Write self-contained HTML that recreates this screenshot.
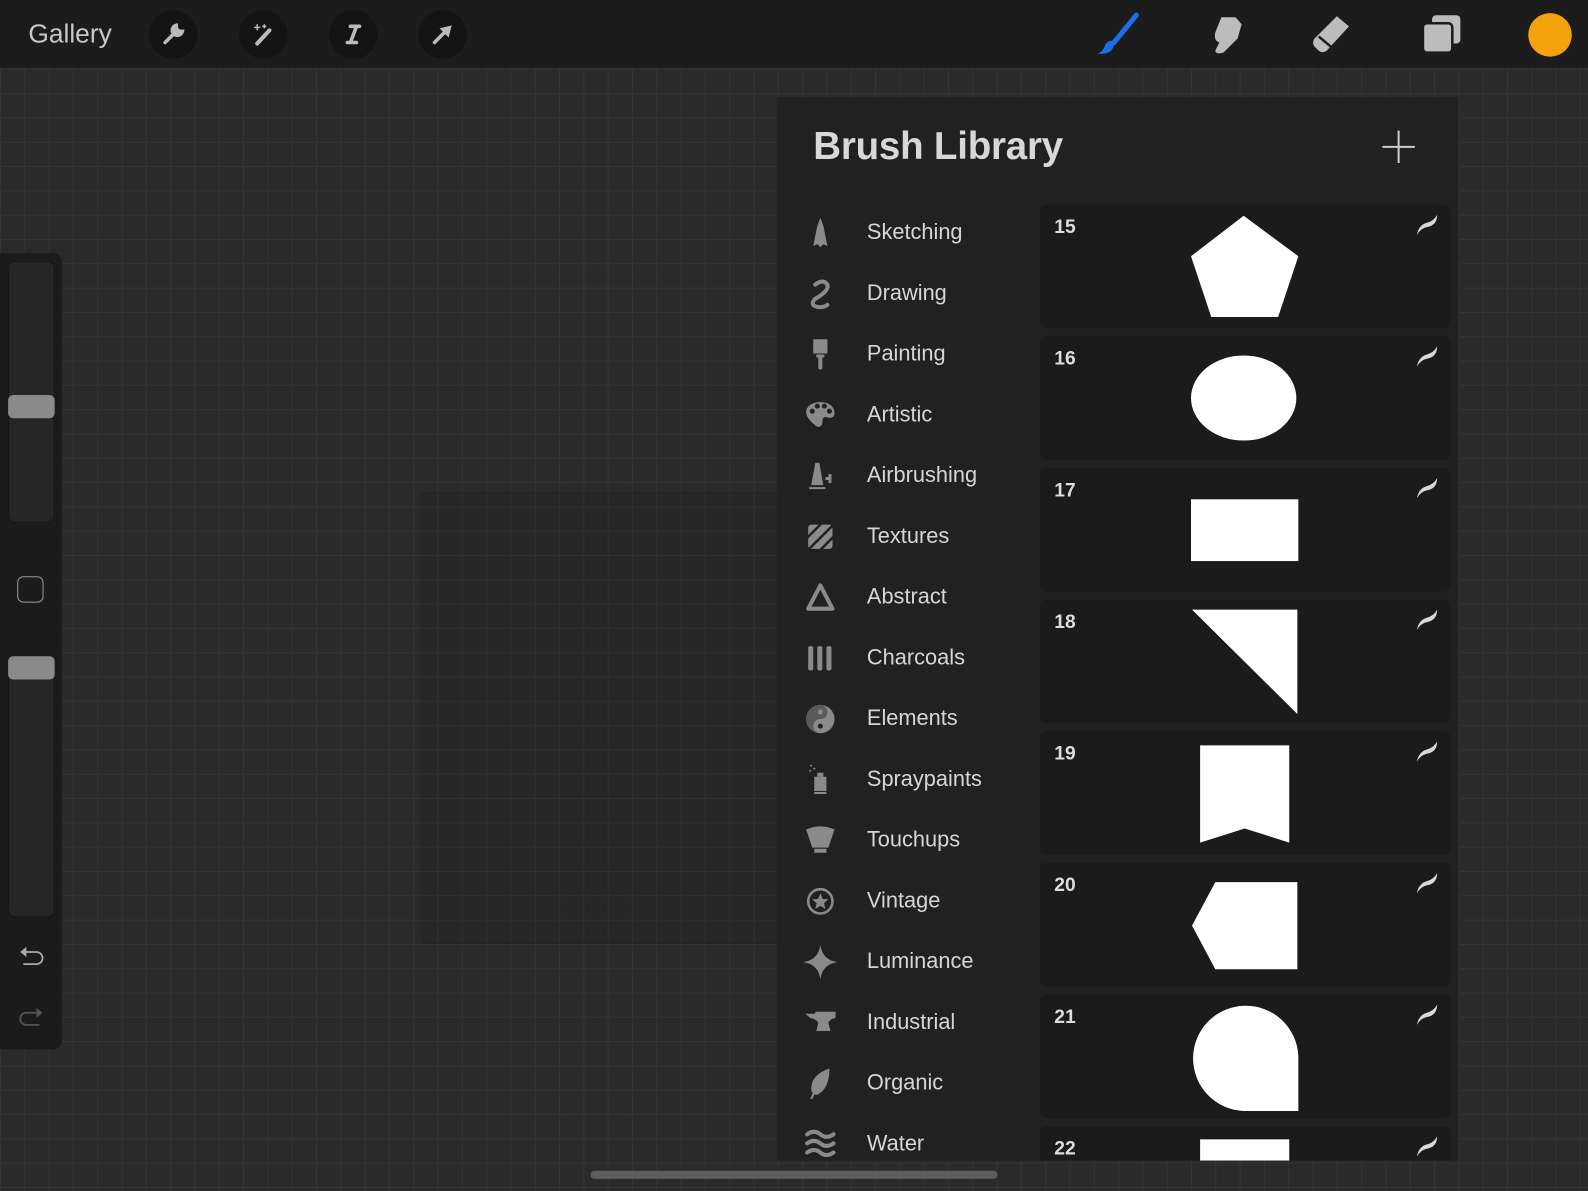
<!DOCTYPE html>
<html><head><meta charset="utf-8"><style>
html,body{margin:0;padding:0;width:1588px;height:1191px;overflow:hidden;background:#2a2a2a}
#w{position:absolute;left:0;top:0;width:1568px;height:1176px;transform:scale(1.01276);transform-origin:0 0;font-family:"Liberation Sans",sans-serif;
background-color:#2a2a2a;background-image:linear-gradient(#343434 1px,transparent 1px),linear-gradient(90deg,#343434 1px,transparent 1px);background-size:24px 24px;background-position:0 -4px}
.top{position:absolute;left:0;top:0;width:1568px;height:67px;background:#1c1c1c}
.gal{position:absolute;left:28px;top:18px;font-size:26px;color:#c8c8c8}
.tc{position:absolute;top:10px;width:48px;height:48px;border-radius:50%;background:#141414}
.tc svg{position:absolute;left:12px;top:12px}
.side{position:absolute;left:0;top:250px;width:61px;height:786px;background:#1b1b1b;border-radius:0 8px 8px 0}
.sl{position:absolute;left:8px;width:46px;background:#262626;border-radius:7px;border:1px solid #151515;box-sizing:border-box}
.th{position:absolute;left:8px;width:46px;height:23px;background:#8a8a8a;border-radius:5px}
.panel{position:absolute;left:767px;top:96px;width:673px;height:1050px;background:#212121;overflow:hidden}
.title{position:absolute;left:36px;top:28px;font-size:38px;font-weight:bold;color:#d8d8d8;letter-spacing:-0.2px}
.row{position:absolute;left:0;height:40px;width:250px}
.row svg{position:absolute;left:26px;top:4px}
.row span{position:absolute;left:89px;top:8px;font-size:21.5px;color:#d6d6d6}
.card{position:absolute;left:260px;width:405px;height:122px;background:#1b1b1b;border-radius:6px;overflow:hidden}
.card b{position:absolute;left:14px;top:12px;font-size:19px;color:#ddd}
.card .sw{position:absolute;left:370px;top:8px}
.card .sh{position:absolute;left:0;top:0}
</style></head><body><div id="w">
<div class="top">
<div class="gal">Gallery</div>
<div class="tc" style="left:147px"><svg width="24" height="24" viewBox="0 0 24 24"><path d="M4 20 L13 11 M15 3 a5 5 0 1 0 6 6 l-3 0 -3 -3 z" stroke="#bbb" stroke-width="3.5" fill="#bbb" stroke-linecap="round"/></svg></div>
<div class="tc" style="left:236px"><svg width="24" height="24" viewBox="0 0 24 24"><path d="M6 21 L18 8" stroke="#bbb" stroke-width="4" stroke-linecap="round"/><path d="M6 2v6M3 5h6M13 2v4M11 4h4" stroke="#bbb" stroke-width="1.5"/></svg></div>
<div class="tc" style="left:325px"><svg width="24" height="24" viewBox="0 0 24 24"><path d="M9 4h9M6 20h9M15 4 L9 20" stroke="#bbb" stroke-width="3.5" stroke-linecap="round"/></svg></div>
<div class="tc" style="left:413px"><svg width="24" height="24" viewBox="0 0 24 24"><path d="M4 20 L16 8" stroke="#bbb" stroke-width="3.5" stroke-linecap="round"/><path d="M21 3 L9 6 L18 15 Z" fill="#bbb"/></svg></div>
<svg style="position:absolute;left:1080px;top:12px" width="48" height="44" viewBox="0 0 48 44"><path d="M42 3 L20 30" stroke="#1a6fe8" stroke-width="5" stroke-linecap="round"/><path d="M19 28 q-6 0 -8 5 q-2 6 -7 8 q10 1 14 -4 q3 -4 1 -9z" fill="#1a6fe8"/></svg>
<svg style="position:absolute;left:1188px;top:12px" width="44" height="44" viewBox="0 0 44 44"><path d="M18 5 h14 l6 7 -4 14 -8 8 -6 6 q-8 2 -8 -2 l4 -8 q-6 -2 -4 -10 z" fill="#bcbcbc"/></svg>
<svg style="position:absolute;left:1294px;top:12px" width="44" height="44" viewBox="0 0 44 44"><path d="M26 4 l12 10 -22 24 q-4 3 -8 0 l-4 -4 q-3 -4 0 -8z" fill="#bcbcbc"/><path d="M8 24 l12 10" stroke="#1c1c1c" stroke-width="2.5"/></svg>
<svg style="position:absolute;left:1401px;top:12px" width="44" height="44" viewBox="0 0 44 44"><rect x="13" y="3" width="28" height="28" rx="4" fill="#bcbcbc"/><rect x="4" y="11" width="29" height="29" rx="4" fill="#bcbcbc" stroke="#1c1c1c" stroke-width="2.5"/></svg>
<div style="position:absolute;left:1509px;top:13px;width:43px;height:43px;border-radius:50%;background:#f5a30d"></div>
</div>
<div style="position:absolute;left:416px;top:486px;width:349px;height:444px;border:1px solid #242424;background:rgba(30,30,30,0.15)"></div>
<div class="side">
<div class="sl" style="top:8px;height:258px"></div><div class="th" style="top:140px"></div>
<div style="position:absolute;left:17px;top:319px;width:26px;height:26px;border:1.5px solid #999;border-radius:6px;box-sizing:border-box"></div>
<div class="sl" style="top:398px;height:258px"></div><div class="th" style="top:398px"></div>
<svg style="position:absolute;left:17px;top:683px" width="28" height="24" viewBox="0 0 28 24"><path d="M3 7 L9 2 V12Z" fill="#aaa"/><path d="M8 7 H19 a6 6 0 0 1 0 12 H6" stroke="#aaa" stroke-width="1.7" fill="none"/></svg>
<svg style="position:absolute;left:17px;top:743px" width="28" height="24" viewBox="0 0 28 24"><path d="M25 7 L19 2 V12Z" fill="#555"/><path d="M20 7 H9 a6 6 0 0 0 0 12 H22" stroke="#555" stroke-width="1.7" fill="none"/></svg>
</div>
<div class="panel">
<div class="title">Brush Library</div>
<svg style="position:absolute;left:597px;top:32px" width="34" height="34"><path d="M17 1V33M1 17H33" stroke="#ccc" stroke-width="2"/></svg>
<div class="row" style="top:113px"><svg width="34" height="34" viewBox="0 0 34 34" fill="#8a8a8a"><path d="M17 2 L20 10 L24 30 L20 28 L17 31 L14 28 L10 30 L14 10Z"/></svg><span>Sketching</span></div>
<div class="row" style="top:173px"><svg width="34" height="34" viewBox="0 0 34 34"><path d="M12 8 q8 -6 12 0 q2 6 -12 14 q-6 6 2 8 q6 1 10 -2" stroke="#8a8a8a" stroke-width="4" fill="none" stroke-linecap="round"/></svg><span>Drawing</span></div>
<div class="row" style="top:233px"><svg width="34" height="34" viewBox="0 0 34 34" fill="#8a8a8a"><path d="M10 2 h14 v14 h-14z M13 17 h8 v3 h-2 v10 a2 2 0 0 1 -4 0 v-10 h-2z"/></svg><span>Painting</span></div>
<div class="row" style="top:293px"><svg width="34" height="34" viewBox="0 0 34 34"><path d="M17 4 c9 0 14 5 14 11 c0 5 -5 5 -8 4 c-3 -1 -4 2 -4 5 c0 4 -4 6 -7 3 c-6 -5 -9 -9 -9 -13 c0 -6 6 -10 14 -10z" fill="#8a8a8a"/><circle cx="9" cy="13" r="2.5" fill="#212121"/><circle cx="14" cy="8" r="2.5" fill="#212121"/><circle cx="21" cy="8" r="2.5" fill="#212121"/><circle cx="26" cy="13" r="2.5" fill="#212121"/></svg><span>Artistic</span></div>
<div class="row" style="top:353px"><svg width="34" height="34" viewBox="0 0 34 34" fill="#8a8a8a"><path d="M12 4 h4 l4 22 h-12z M6 28 h16 v2 h-16z M22 18 h3 v-3 h3 v9 h-3 v-3 h-3z"/></svg><span>Airbrushing</span></div>
<div class="row" style="top:413px"><svg width="34" height="34" viewBox="0 0 34 34"><rect x="5" y="5" width="24" height="24" rx="3" fill="#8a8a8a"/><path d="M3 19 L19 3 M6 29 L29 6 M16 31 L31 16" stroke="#212121" stroke-width="2.5"/></svg><span>Textures</span></div>
<div class="row" style="top:473px"><svg width="34" height="34" viewBox="0 0 34 34"><path d="M17 5 L29 28 H5Z" fill="none" stroke="#8a8a8a" stroke-width="4" stroke-linejoin="round"/></svg><span>Abstract</span></div>
<div class="row" style="top:533px"><svg width="34" height="34" viewBox="0 0 34 34" fill="#8a8a8a"><rect x="5" y="5" width="5" height="24" rx="2"/><rect x="14" y="5" width="5" height="24" rx="2"/><rect x="23" y="5" width="5" height="24" rx="2"/></svg><span>Charcoals</span></div>
<div class="row" style="top:593px"><svg width="34" height="34" viewBox="0 0 34 34"><circle cx="17" cy="17" r="14" fill="#8a8a8a"/><path d="M17 3 a7 7 0 0 1 0 14 a7 7 0 0 0 0 14 a14 14 0 0 1 0 -28z" fill="#5a5a5a"/><circle cx="17" cy="10" r="2.5" fill="#8a8a8a"/><circle cx="17" cy="24" r="2.5" fill="#212121"/></svg><span>Elements</span></div>
<div class="row" style="top:653px"><svg width="34" height="34" viewBox="0 0 34 34" fill="#8a8a8a"><rect x="11" y="14" width="12" height="14"/><rect x="11" y="29" width="12" height="2"/><rect x="14" y="10" width="6" height="4"/><circle cx="8" cy="3" r="1"/><circle cx="11" cy="6" r="1"/><circle cx="7" cy="8" r="1"/></svg><span>Spraypaints</span></div>
<div class="row" style="top:713px"><svg width="34" height="34" viewBox="0 0 34 34" fill="#8a8a8a"><path d="M3 6 q14 -6 28 0 l-6 18 h-16z M11 25 h12 v4 h-12z"/></svg><span>Touchups</span></div>
<div class="row" style="top:773px"><svg width="34" height="34" viewBox="0 0 34 34"><circle cx="17" cy="17" r="12" fill="none" stroke="#8a8a8a" stroke-width="2.5"/><path d="M17 9 L19.3 14.5 L25 15 L20.7 18.8 L22 24.5 L17 21.5 L12 24.5 L13.3 18.8 L9 15 L14.7 14.5Z" fill="#8a8a8a"/></svg><span>Vintage</span></div>
<div class="row" style="top:833px"><svg width="34" height="34" viewBox="0 0 34 34"><path d="M17 0 Q19 15 34 17 Q19 19 17 34 Q15 19 0 17 Q15 15 17 0Z" fill="#8a8a8a"/></svg><span>Luminance</span></div>
<div class="row" style="top:893px"><svg width="34" height="34" viewBox="0 0 34 34" fill="#8a8a8a"><path d="M2 8 h10 v-2 h20 v6 q-6 1 -7 5 l2 8 h-14 l2 -8 q-2 -4 -8 -5z"/></svg><span>Industrial</span></div>
<div class="row" style="top:953px"><svg width="34" height="34" viewBox="0 0 34 34"><path d="M26 2 q-18 6 -18 20 q0 6 6 6 q12 -6 12 -26z" fill="#8a8a8a"/><path d="M8 32 q4 -10 14 -20" stroke="#8a8a8a" stroke-width="2" fill="none"/></svg><span>Organic</span></div>
<div class="row" style="top:1013px"><svg width="34" height="34" viewBox="0 0 34 34"><path d="M4 7 q7 -5 13 0 q6 5 13 0 M4 16 q7 -5 13 0 q6 5 13 0 M4 25 q7 -5 13 0 q6 5 13 0" stroke="#8a8a8a" stroke-width="4" fill="none" stroke-linecap="round"/></svg><span>Water</span></div>

<div class="card" style="top:106px"><b>15</b><svg class="sh" width="405" height="122"><polygon points="201,11 255,51 235,111 169,111 149,51" fill="#fff"/></svg><svg class="sw" width="24" height="24" viewBox="0 0 24 24"><path d="M2 22 Q4 12 12 10 Q19 8 22 2 Q22 12 13 14 Q6 15 2 22Z" fill="#d8d8d8"/></svg></div>
<div class="card" style="top:236px"><b>16</b><svg class="sh" width="405" height="122"><ellipse cx="201" cy="61" rx="52" ry="42" fill="#fff"/></svg><svg class="sw" width="24" height="24" viewBox="0 0 24 24"><path d="M2 22 Q4 12 12 10 Q19 8 22 2 Q22 12 13 14 Q6 15 2 22Z" fill="#d8d8d8"/></svg></div>
<div class="card" style="top:366px"><b>17</b><svg class="sh" width="405" height="122"><rect x="149" y="31" width="106" height="61" fill="#fff"/></svg><svg class="sw" width="24" height="24" viewBox="0 0 24 24"><path d="M2 22 Q4 12 12 10 Q19 8 22 2 Q22 12 13 14 Q6 15 2 22Z" fill="#d8d8d8"/></svg></div>
<div class="card" style="top:496px"><b>18</b><svg class="sh" width="405" height="122"><polygon points="150,10 254,10 254,113" fill="#fff"/></svg><svg class="sw" width="24" height="24" viewBox="0 0 24 24"><path d="M2 22 Q4 12 12 10 Q19 8 22 2 Q22 12 13 14 Q6 15 2 22Z" fill="#d8d8d8"/></svg></div>
<div class="card" style="top:626px"><b>19</b><svg class="sh" width="405" height="122"><polygon points="158,14 246,14 246,110 202,96 158,110" fill="#fff"/></svg><svg class="sw" width="24" height="24" viewBox="0 0 24 24"><path d="M2 22 Q4 12 12 10 Q19 8 22 2 Q22 12 13 14 Q6 15 2 22Z" fill="#d8d8d8"/></svg></div>
<div class="card" style="top:756px"><b>20</b><svg class="sh" width="405" height="122"><polygon points="173,19 254,19 254,105 173,105 150,62" fill="#fff"/></svg><svg class="sw" width="24" height="24" viewBox="0 0 24 24"><path d="M2 22 Q4 12 12 10 Q19 8 22 2 Q22 12 13 14 Q6 15 2 22Z" fill="#d8d8d8"/></svg></div>
<div class="card" style="top:886px"><b>21</b><svg class="sh" width="405" height="122"><path d="M255 115 H201 A52 52 0 1 1 255 61 Z" fill="#fff"/></svg><svg class="sw" width="24" height="24" viewBox="0 0 24 24"><path d="M2 22 Q4 12 12 10 Q19 8 22 2 Q22 12 13 14 Q6 15 2 22Z" fill="#d8d8d8"/></svg></div>
<div class="card" style="top:1016px;height:34px;border-radius:6px 6px 0 0"><b>22</b><svg class="sh" width="405" height="40"><rect x="158" y="13" width="88" height="30" fill="#fff"/></svg><svg class="sw" width="24" height="24" viewBox="0 0 24 24"><path d="M2 22 Q4 12 12 10 Q19 8 22 2 Q22 12 13 14 Q6 15 2 22Z" fill="#d8d8d8"/></svg></div>
</div>
<div style="position:absolute;left:583px;top:1156px;width:402px;height:8px;border-radius:4px;background:#5e5e5e"></div>
</div></body></html>
